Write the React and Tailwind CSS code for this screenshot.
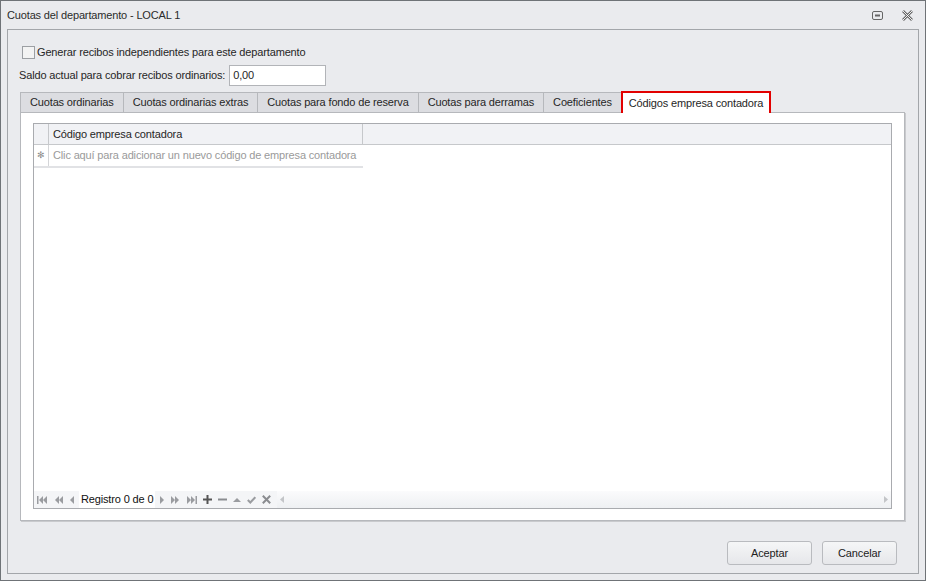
import React from 'react';

const tabs = [
  'Cuotas ordinarias',
  'Cuotas ordinarias extras',
  'Cuotas para fondo de reserva',
  'Cuotas para derramas',
  'Coeficientes',
  'Códigos empresa contadora',
];

function Tri({ dir = 'left', bar = false, double = false }) {
  const left = dir === 'left';
  return (
    <svg width={bar || double ? 10 : 6} height="8" viewBox={bar || double ? '0 0 10 8' : '0 0 6 8'} className="shrink-0">
      {left ? (
        <g fill="#9a9ca0">
          {bar && <rect x="0" y="0" width="1.5" height="8" />}
          {double || bar ? (
            <>
              <polygon points="6,0 6,8 2,4" />
              <polygon points="10,0 10,8 6,4" />
            </>
          ) : (
            <polygon points="5,0 5,8 1,4" />
          )}
        </g>
      ) : (
        <g fill="#9a9ca0">
          {bar && <rect x="8.5" y="0" width="1.5" height="8" />}
          {double || bar ? (
            <>
              <polygon points="0,0 0,8 4,4" />
              <polygon points="4,0 4,8 8,4" />
            </>
          ) : (
            <polygon points="1,0 1,8 5,4" />
          )}
        </g>
      )}
    </svg>
  );
}

export default function App() {
  return (
    <div
      className="w-[926px] h-[581px] bg-[#eaebee] border border-[#6f7377] flex flex-col text-[11px] tracking-[-0.15px] text-[#262626] select-none"
      style={{ fontFamily: '"Segoe UI", "Liberation Sans", Arial, sans-serif' }}
    >
      {/* title bar */}
      <div className="h-[28px] flex items-center justify-between pl-[6px] pr-[12px]">
        <span className="text-[#2b2b2b]">Cuotas del departamento - LOCAL 1</span>
        <div className="flex items-center gap-[19px]">
          <svg width="11" height="9" viewBox="0 0 11 9">
            <rect x="0.5" y="0.5" width="10" height="8" rx="1.5" fill="none" stroke="#666" />
            <rect x="3" y="3.5" width="5" height="2" fill="#666" />
          </svg>
          <svg width="11" height="11" viewBox="0 0 11 11">
            <path d="M1 1 L10 10 M10 1 L1 10" stroke="#666" strokeWidth="2.6" fill="none" />
            <path d="M1 1 L10 10 M10 1 L1 10" stroke="#fff" strokeWidth="0.9" fill="none" />
          </svg>
        </div>
      </div>

      {/* inner panel */}
      <div className="flex-1 mx-[6px] mb-[6px] border border-[#a3a6aa] flex flex-col pl-[12px] pr-[12px]">
        <div className="flex items-center h-[14px] mt-[15px] pl-[2px]">
          <div className="w-[13px] h-[13px] border border-[#9c9fa3] bg-[#f3f3f3] mr-[2px]" />
          <span>Generar recibos independientes para este departamento</span>
        </div>
        <div className="flex items-center mt-[6px] -ml-[1px]">
          <span>Saldo actual para cobrar recibos ordinarios:</span>
          <div className="ml-[4px] w-[97px] h-[21px] bg-white border border-[#b2b4b8] flex items-center px-[3px]">0,00</div>
        </div>

        {/* tabs */}
        <div className="flex items-end mt-[4px] h-[22px] relative z-10">
          {tabs.map((t, i) =>
            i === tabs.length - 1 ? (
              <div
                key={t}
                className="h-[22px] px-[6px] bg-white border-2 border-[#e20000] border-b-0 flex items-center -mb-[1px] whitespace-nowrap"
              >
                {t}
              </div>
            ) : (
              <div
                key={t}
                className="h-[20px] px-[9px] bg-[#dcdde1] border border-[#b6b8bc] border-b-0 -mr-[1px] flex items-center whitespace-nowrap"
              >
                {t}
              </div>
            )
          )}
        </div>

        {/* tab page */}
        <div className="h-[409px] mr-[1px] bg-white border border-[#b6b8bc] shadow-[1px_1px_0_#c9cacd] flex flex-col px-[12px] pt-[10px] pb-[11px]">
          <div className="flex-1 border border-[#a9abaf] flex flex-col">
            {/* header */}
            <div className="h-[21px] flex bg-[#f1f2f5] border-b border-[#c6c8cb]">
              <div className="w-[15px] border-r border-[#c6c8cb]" />
              <div className="w-[314px] border-r border-[#c6c8cb] flex items-center pl-[4px] whitespace-nowrap">
                Código empresa contadora
              </div>
              <div className="flex-1" />
            </div>
            {/* new row */}
            <div className="flex h-[23px] w-[329px] border-b-2 border-[#e1e2e5]">
              <div className="w-[15px] shrink-0 border-r border-[#d4d5d8] flex items-center justify-center text-[9px] text-[#8a8a8a]">
                ✻
              </div>
              <div className="flex items-center pl-[4px] text-[#9a9a9a] whitespace-nowrap">
                Clic aquí para adicionar un nuevo código de empresa contadora
              </div>
            </div>
            <div className="flex-1" />
            {/* navigator */}
            <div className="h-[17px] flex items-center pl-[3px] bg-[#f4f5f7]">
              <div className="flex items-center gap-[6px]">
                <Tri dir="left" bar />
                <Tri dir="left" double />
                <Tri dir="left" />
              </div>
              <span className="bg-white px-[2px] ml-[4px] mr-[4px] text-[#111] whitespace-nowrap">Registro 0 de 0</span>
              <div className="flex items-center gap-[6px]">
                <Tri dir="right" />
                <Tri dir="right" double />
                <Tri dir="right" bar />
                <svg width="9" height="9" viewBox="0 0 9 9">
                  <path d="M4.5 0 V9 M0 4.5 H9" stroke="#555" strokeWidth="2" />
                </svg>
                <svg width="9" height="9" viewBox="0 0 9 9">
                  <path d="M0 4.5 H9" stroke="#8a8c90" strokeWidth="2" />
                </svg>
                <svg width="8" height="6" viewBox="0 0 8 6">
                  <polygon points="0,5 8,5 4,1" fill="#9a9ca0" />
                </svg>
                <svg width="9" height="8" viewBox="0 0 9 8">
                  <path d="M0.8 4 L3.3 6.5 L8.3 1.2" stroke="#9a9ca0" strokeWidth="2" fill="none" />
                </svg>
                <svg width="9" height="9" viewBox="0 0 9 9">
                  <path d="M0.8 0.8 L8.2 8.2 M8.2 0.8 L0.8 8.2" stroke="#8a8c90" strokeWidth="2" />
                </svg>
              </div>
              <div className="flex-1 ml-[6px] h-[17px] flex items-center justify-between px-[3px] bg-gradient-to-b from-[#fbfbfc] to-[#eef0f3]">
                <svg width="4" height="7" viewBox="0 0 4 7">
                  <polygon points="4,0 4,7 0,3.5" fill="#c3c5c8" />
                </svg>
                <svg width="4" height="7" viewBox="0 0 4 7">
                  <polygon points="0,0 0,7 4,3.5" fill="#c3c5c8" />
                </svg>
              </div>
            </div>
          </div>
        </div>

        <div className="flex-1 flex items-start justify-end pt-[20px] pr-[9px] gap-[10px]">
          <button className="w-[85px] h-[24px] rounded-[3px] border border-[#b9bbbf] bg-gradient-to-b from-[#f5f6f7] to-[#e6e7ea] text-[#222]">
            Aceptar
          </button>
          <button className="w-[75px] h-[24px] rounded-[3px] border border-[#b9bbbf] bg-gradient-to-b from-[#f5f6f7] to-[#e6e7ea] text-[#222]">
            Cancelar
          </button>
        </div>
      </div>
    </div>
  );
}
